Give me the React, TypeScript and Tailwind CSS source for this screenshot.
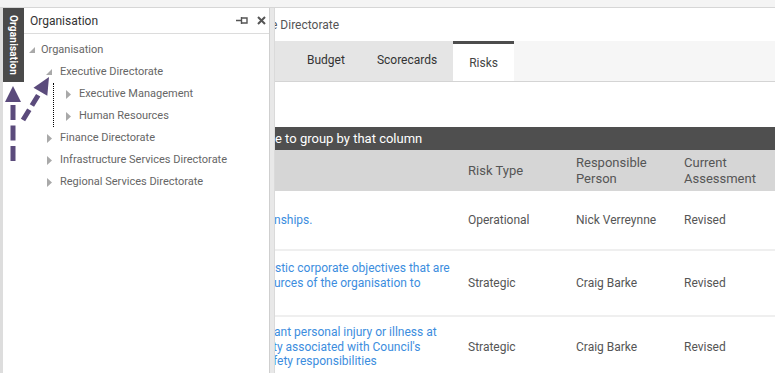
import React from 'react';

const Expanded = () => (
  <svg width="6" height="6" viewBox="0 0 6 6">
    <path d="M6 0V6H0Z" fill="#a9a9a9" />
  </svg>
);

const Collapsed = () => (
  <svg width="5" height="9" viewBox="0 0 5 9">
    <path d="M0 0L5 4.5L0 9Z" fill="#a9a9a9" />
  </svg>
);

const rows = [
  {
    lines: [{ text: 'nships.', shift: 'ml-[-1px]' }],
    type: 'Operational',
    person: 'Nick Verreynne',
    assessment: 'Revised',
    height: 'h-[60px]',
  },
  {
    lines: [
      { text: 'stic corporate objectives that are', shift: 'ml-0' },
      { text: 'urces of the organisation to', shift: 'ml-[-1px]' },
      { text: '\u00a0', shift: 'ml-0' },
    ],
    type: 'Strategic',
    person: 'Craig Barke',
    assessment: 'Revised',
    height: 'h-[66px]',
  },
  {
    lines: [
      { text: 'ant personal injury or illness at', shift: 'ml-[-1px]' },
      { text: 'ty associated with Council\'s', shift: 'ml-[-2px]' },
      { text: 'fety responsibilities', shift: 'ml-[-2px]' },
    ],
    type: 'Strategic',
    person: 'Craig Barke',
    assessment: 'Revised',
    height: 'h-[62px]',
  },
];

export default function App() {
  return (
    <div className="relative w-[775px] h-[373px] overflow-hidden bg-white font-['Roboto',sans-serif] flex flex-col">
      {/* top strip */}
      <div className="h-[8px] shrink-0 bg-[#f4f4f4] border-b border-[#d6d6d6]" />

      <div className="flex flex-1 min-h-0">
        {/* dock strip with vertical tab */}
        <div className="w-[3px] bg-[#dddddd]" />
        <div className="w-[21px] flex flex-col">
          <div className="h-[74px] bg-[#4a4a4a] flex items-center justify-center">
            <span className="[writing-mode:vertical-rl] text-white text-[10px] font-bold tracking-[0.2px]">
              Organisation
            </span>
          </div>
        </div>

        {/* flyout panel */}
        <div className="w-[246px] border-r border-[#cfcfcf] flex flex-col">
          <div className="h-[26px] border-b border-[#dcdcdc] flex items-center pl-[6px] pr-[3px]">
            <span className="text-[12px] text-[#333]">Organisation</span>
            <div className="ml-auto flex items-center gap-[9px]">
              <svg width="12" height="9" viewBox="0 0 12 9">
                <path d="M0 4.5H5M5.5 1V8M5.5 2H11V7H5.5" stroke="#555" strokeWidth="1.4" fill="none" />
              </svg>
              <svg width="9" height="9" viewBox="0 0 9 9">
                <path d="M1 1L8 8M8 1L1 8" stroke="#555" strokeWidth="2" />
              </svg>
            </div>
          </div>

          <div className="pt-[5px] text-[11px] text-[#666]">
            <div className="flex items-center h-[22px] pl-[5px]">
              <div className="w-[12px] flex items-center"><Expanded /></div>
              <span>Organisation</span>
            </div>
            <div className="flex items-center h-[22px] pl-[22px]">
              <div className="w-[14px] flex items-center"><Expanded /></div>
              <span>Executive Directorate</span>
            </div>
            <div className="ml-[29px] border-l border-dotted border-black">
              <div className="flex items-center h-[22px] pl-[12px]">
                <div className="w-[13px] flex items-center"><Collapsed /></div>
                <span>Executive Management</span>
              </div>
              <div className="flex items-center h-[22px] pl-[12px]">
                <div className="w-[13px] flex items-center"><Collapsed /></div>
                <span>Human Resources</span>
              </div>
            </div>
            {['Finance Directorate', 'Infrastructure Services Directorate', 'Regional Services Directorate'].map((name) => (
              <div key={name} className="flex items-center h-[22px] pl-[23px]">
                <div className="w-[13px] flex items-center"><Collapsed /></div>
                <span>{name}</span>
              </div>
            ))}
          </div>
        </div>

        {/* splitter */}
        <div className="w-[5px] bg-[#e8e8e8] border-r border-[#dadada]" />

        {/* main content */}
        <div className="flex-1 min-w-0 overflow-hidden flex flex-col">
          <div className="h-[33px] shrink-0 flex items-center">
            <span className="ml-[-4px] text-[12px] text-[#555] whitespace-nowrap">e Directorate</span>
          </div>

          <div className="h-[41px] shrink-0 flex bg-[#f6f6f6] border-b border-[#d4d4d4] text-[12px]">
            <div className="flex bg-[#e5e5e5] pl-[16px] pb-[2px]">
              <div className="px-[16px] flex items-center text-[#333]">Budget</div>
              <div className="px-[16px] flex items-center text-[#333]">Scorecards</div>
            </div>
            <div className="px-[16px] flex items-center bg-white border-t-[3px] border-[#4d4d4d] text-[#444]">Risks</div>
          </div>

          <div className="h-[45px] shrink-0" />

          <div className="h-[23px] shrink-0 bg-[#4f4f4f] flex items-center text-white text-[13px] whitespace-nowrap">
            e to group by that column
          </div>

          <div className="h-[41px] shrink-0 grid grid-cols-[193px_108px_108px_1fr] items-center bg-[#d6d6d6] text-[13px] leading-[16px] text-[#555]">
            <div />
            <div>Risk Type</div>
            <div>Responsible<br />Person</div>
            <div>Current<br />Assessment</div>
          </div>

          {rows.map((row, i) => (
            <div
              key={i}
              className={`${row.height} shrink-0 grid grid-cols-[193px_108px_108px_1fr] items-center border-b-2 border-[#efefef] text-[12px] text-[#555]`}
            >
              <div className="text-[#3c8dde] leading-[14.5px] whitespace-nowrap">
                {row.lines.map((l, j) => (
                  <div key={j} className={l.shift}>{l.text}</div>
                ))}
              </div>
              <div>{row.type}</div>
              <div>{row.person}</div>
              <div>{row.assessment}</div>
            </div>
          ))}
        </div>
      </div>

      {/* annotation arrows drawn over the page */}
      <svg className="absolute left-0 top-0 pointer-events-none" width="60" height="170" viewBox="0 0 60 170">
        <line x1="13" y1="161" x2="13" y2="103" stroke="#5b4b7c" strokeWidth="5" strokeDasharray="15 5.5" />
        <polygon points="13,86 5,102 21,102" fill="#5b4b7c" />
        <line x1="23" y1="120" x2="40.4" y2="91.7" stroke="#5b4b7c" strokeWidth="5" strokeDasharray="12 5" />
        <polygon points="49,77 47.3,95.7 33.5,87.7" fill="#5b4b7c" />
      </svg>
    </div>
  );
}
